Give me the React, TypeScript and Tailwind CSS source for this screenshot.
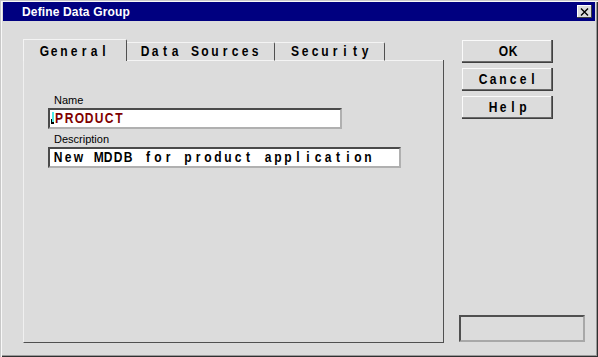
import React from "react";

const Cells = ({ text }: { text: string }) => (
  <>
    {text.split("").map((c, i) => (
      <span key={i} className="inline-block w-[10px] text-center scale-x-[0.86]">
        {c === " " ? "\u00a0" : c}
      </span>
    ))}
  </>
);

const mono = "font-['Liberation_Sans',Arial,sans-serif] font-bold text-[14px] leading-[16px] whitespace-nowrap";

const Button = ({ label }: { label: string }) => (
  <div
    className={`w-[91px] h-[23px] flex items-center justify-center pb-[1px] text-black bg-[#dcdcdc] shadow-[inset_-1px_-1px_0_#404040,inset_-2px_-2px_0_#6a6a6a,inset_1px_1px_0_#fafafa] ${mono}`}
  >
    <Cells text={label} />
  </div>
);

export default function App() {
  return (
    <div className="w-[598px] h-[357px] bg-[#dcdcdc] flex flex-col pt-[2px] pl-[3px] pr-[3px] shadow-[inset_1px_1px_0_#c8c8c8,inset_2px_2px_0_#f8f8f8,inset_-1px_-1px_0_#303030,inset_-2px_-2px_0_#9a9a9a]">
      {/* Title bar */}
      <div className="h-[19px] bg-[#000080] flex items-center pl-[19px] pr-[3px]">
        <span className="flex-1 text-white font-['Liberation_Sans',Arial,sans-serif] font-bold text-[12px] leading-[14px] tracking-[0.15px]">
          Define Data Group
        </span>
        <div className="w-[15px] h-[13px] bg-[#dcdcdc] flex items-center justify-center shadow-[inset_-1px_-1px_0_#404040,inset_1px_1px_0_#ffffff]">
          <svg width="9" height="8" viewBox="0 0 9 8">
            <path d="M1 0.5 L8 7.5 M8 0.5 L1 7.5" stroke="#000" strokeWidth="1.4" fill="none" />
          </svg>
        </div>
      </div>

      {/* Body */}
      <div className="flex-1 flex pt-[18px] pb-[14px] pl-[20px]">
        {/* Left column: tabs + panel */}
        <div className="w-[421px] flex flex-col">
          <div className="h-[22px] flex items-end">
            <div className={`w-[104px] h-[22px] border-l border-t border-r border-l-[#f4f4f4] border-t-[#f4f4f4] border-r-[#505050] rounded-tr-[2px] flex items-end pl-[15px] pb-[2px] text-black ${mono}`}>
              <Cells text="General" />
            </div>
            <div className={`w-[148px] h-[19px] border-t border-r border-b border-t-[#f4f4f4] border-r-[#505050] border-b-[#f4f4f4] rounded-tr-[2px] flex items-end pl-[13px] pb-[1px] text-black ${mono}`}>
              <Cells text="Data Sources" />
            </div>
            <div className={`w-[110px] h-[19px] border-t border-r border-b border-t-[#f4f4f4] border-r-[#505050] border-b-[#f4f4f4] rounded-tr-[2px] flex items-end pl-[15px] pb-[1px] text-black ${mono}`}>
              <Cells text="Security" />
            </div>
            <div className="flex-1 h-[1px] bg-[#f4f4f4] border-r border-r-[#505050]" />
          </div>
          <div className="flex-1 border-l border-r border-b border-l-[#f0f0f0] border-r-[#505050] border-b-[#505050] pl-[24px] pt-[33px] flex flex-col">
            <div className="pl-[6px] font-['Liberation_Sans',Arial,sans-serif] text-[11px] leading-[13px] text-black">
              Name
            </div>
            <div className="relative mt-[1px] w-[294px] h-[21px] bg-white border-2 border-t-[#4a4a4a] border-l-[#4a4a4a] border-b-[#b0b0b0] border-r-[#b0b0b0] pl-[4px]">
              <div className={`text-[#800000] ${mono} leading-[14px]`}>
                <Cells text="PRODUCT" />
              </div>
              <div className="absolute left-[2px] top-[2px] w-[2px] h-[11px] bg-[#50e8e8]" />
              <div className="absolute left-[1px] top-[9px] w-[1px] h-[5px] bg-black" />
              <div className="absolute left-[2px] top-[12px] w-[2px] h-[2px] bg-black" />
            </div>
            <div className="mt-[4px] pl-[6px] font-['Liberation_Sans',Arial,sans-serif] text-[11px] leading-[13px] text-black">
              Description
            </div>
            <div className="mt-[1px] w-[353px] h-[21px] bg-white border-2 border-t-[#4a4a4a] border-l-[#4a4a4a] border-b-[#b0b0b0] border-r-[#b0b0b0] pl-[3px]">
              <div className={`text-black ${mono} leading-[14px]`}>
                <Cells text="New MDDB for product application" />
              </div>
            </div>
          </div>
        </div>

        {/* Right column */}
        <div className="flex-1 flex flex-col pt-[1px]">
          <div className="ml-[18px] flex flex-col gap-[5px]">
            <Button label="OK" />
            <Button label="Cancel" />
            <Button label="Help" />
          </div>
          <div className="mt-auto mb-[1px] ml-[15px] w-[126px] h-[27px] border-2 border-t-[#505050] border-l-[#505050] border-b-[#a8a8a8] border-r-[#a8a8a8]" />
        </div>
      </div>
    </div>
  );
}
